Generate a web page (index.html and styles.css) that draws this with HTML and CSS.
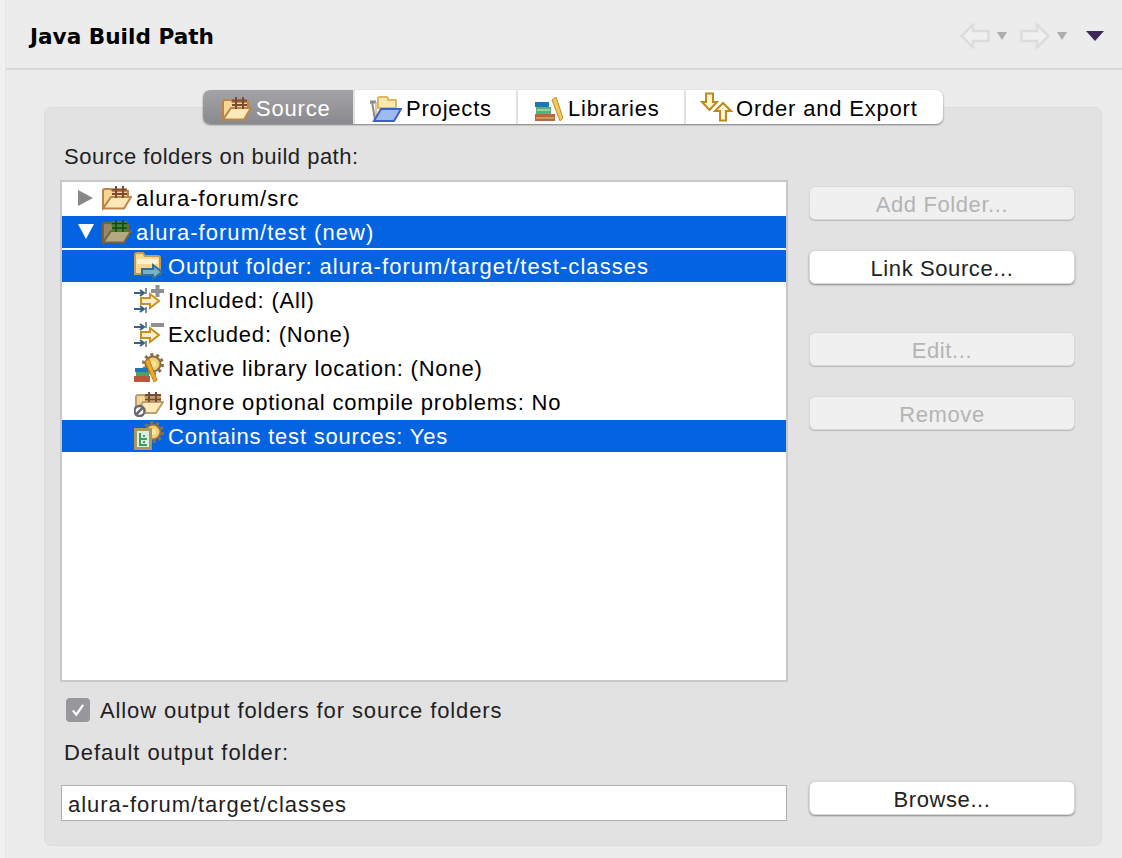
FILE: index.html
```html
<!DOCTYPE html>
<html lang="en">
<head>
  <meta charset="UTF-8">
  <title>Java Build Path</title>
  <link rel="stylesheet" href="styles.css">
</head>
<body>
  <svg class="defs" width="0" height="0">
    <symbol id="src-folder" viewBox="0 0 30 24">
      <path d="M1 22V5q0-2 2-2h6l2 2h15v8H9z" fill="#f5d692" stroke="#b9854a" stroke-width="2"/>
      <path d="M1 22.500 9 11h20l-7 11.500z" fill="#fde9b8" stroke="#b9854a" stroke-width="2"/>
      <path d="M10 3.500h15M10 8h15M14 0v12M21 0v12" stroke="#7c4a32" stroke-width="2" fill="none"/>
    </symbol>
    <symbol id="src-folder-sel" viewBox="0 0 30 24">
      <path d="M1 22V5q0-2 2-2h6l2 2h15v8H9z" fill="#95896a" stroke="#7a6238" stroke-width="2"/>
      <path d="M1 22.500 9 11h20l-7 11.500z" fill="#b4a982" stroke="#7a6238" stroke-width="2"/>
      <path d="M10 1h15v10H10z" fill="#3f8a2e"/>
      <path d="M10 3.500h15M10 8h15M14 0v12M21 0v12" stroke="#1f3f20" stroke-width="1.500" fill="none"/>
    </symbol>
    <symbol id="projects" viewBox="0 0 32 26">
      <path d="M0 6h6" fill="none" stroke="#8a8a90" stroke-width="3"/>
      <path d="M2 6l3 18" fill="none" stroke="#8a8a90" stroke-width="2"/>
      <path d="M8 7V2.500q0-1.500 1.500-1.500h7q1.500 0 1.500 1.500V4h8v8H8z" fill="#fbe8ae" stroke="#d9b866" stroke-width="2"/>
      <path d="M6 21V6" stroke="#d9b866" stroke-width="1.500"/>
      <path d="M4 25 11 13h20l-7 12z" fill="#9dbbee" stroke="#3f62c0" stroke-width="2"/>
    </symbol>
    <symbol id="books" viewBox="0 0 30 24">
      <path d="M1 5h14v5H1z" fill="#1c76b8"/>
      <path d="M2 10h15v7H2z" fill="#5fae7a"/>
      <path d="M3 12h13v2H3z" fill="#9ad0a8"/>
      <path d="M1 17h20v7H1z" fill="#b8683a"/>
      <path d="M2 20h18v2H2z" fill="#d69460"/>
      <path d="m18 3 4-3 7 21-3 3z" fill="#f0c860" stroke="#c98c22"/>
    </symbol>
    <symbol id="order" viewBox="0 0 33 30">
      <path d="M6 1.500h7V10h4l-7.500 8L2 10h4z" fill="#fbf2d0" stroke="#bb8a1e" stroke-width="2"/>
      <path d="M20 28.500V19h-5l8-8 8 8h-5v9.500z" fill="#fbf2d0" stroke="#bb8a1e" stroke-width="2"/>
    </symbol>
    <symbol id="output" viewBox="0 0 30 30">
      <path d="M1 23V4q0-2 2-2h6l2 3h13q2 0 2 2v16z" fill="#f8d894" stroke="#c89a58" stroke-width="2"/>
      <path d="M3 8h21v5H3z" fill="#fff2cf"/>
      <path d="M8 18h11v-4l9 7-9 7v-4H8z" fill="#7cb0c4" stroke="#2f6f9c" stroke-width="2"/>
    </symbol>
    <symbol id="filter-base" viewBox="0 0 30 30">
      <path d="M0 8h9M6 5l4 3-4 3M0 24h9M6 21l4 3-4 3" fill="none" stroke="#3d5f80" stroke-width="2"/>
      <path d="M12 3v6M12 22v6" stroke="#7a8ea0" stroke-width="2"/>
      <path d="M7 13h9V9l9 7-9 7v-4H7z" fill="#fbeec4" stroke="#c8901e" stroke-width="2"/>
    </symbol>
    <symbol id="included" viewBox="0 0 30 30">
      <use href="#filter-base" width="30" height="30"/>
      <path d="M23.500 0v12M17 6h13" stroke="#8e9094" stroke-width="4"/>
    </symbol>
    <symbol id="excluded" viewBox="0 0 30 30">
      <use href="#filter-base" width="30" height="30"/>
      <path d="M17 6h13" stroke="#8e9094" stroke-width="4"/>
    </symbol>
    <symbol id="gear" viewBox="0 0 22 22">
      <circle cx="11" cy="11" r="9.500" fill="none" stroke="#86704a" stroke-width="3" stroke-dasharray="3 2.970"/>
      <circle cx="11" cy="11" r="7.500" fill="#f2cf72" stroke="#86704a" stroke-width="2"/>
      <circle cx="11" cy="11" r="3" fill="#fbe6a8"/>
    </symbol>
    <symbol id="native" viewBox="0 0 30 30">
      <use href="#gear" x="8" y="0" width="22" height="22"/>
      <path d="M1 15h13v4H1z" fill="#1c76b8"/>
      <path d="M2 19h13v4H2z" fill="#4f9e6c"/>
      <path d="M0 23h16v6H0z" fill="#b8583a"/>
      <path d="m11 8 4-2 8 21-3 2z" fill="#eca82a" stroke="#c47f16"/>
    </symbol>
    <symbol id="ignore" viewBox="0 0 30 30">
      <path d="M2 24V10q0-2 2-2h6l2 2h14v6H9z" fill="#f5d692" stroke="#b8a070" stroke-width="2"/>
      <path d="M2 26 9 15h20l-7 11z" fill="#fde9b8" stroke="#b8a070" stroke-width="2"/>
      <path d="M11 8h16M11 12.500h16M15 5v10M22 5v10" stroke="#7c4a32" stroke-width="2" fill="none"/>
      <circle cx="5.500" cy="24" r="5" fill="#fff" stroke="#6a6a70" stroke-width="2.500"/>
      <path d="m2 27.500 7-7" stroke="#6a6a70" stroke-width="2.500"/>
    </symbol>
    <symbol id="contains" viewBox="0 0 30 30">
      <use href="#gear" x="8" y="0" width="22" height="22"/>
      <path d="M1.500 8.500h15v19h-15z" fill="#dcefe0" stroke="#a89a5c" stroke-width="3"/>
      <path d="M6 12v12h7M6 18h7M10 14v2M10 20v2" fill="none" stroke="#3f9a66" stroke-width="2"/>
    </symbol>
  </svg>

  <div class="page">
    <header class="title-bar">
      <h1>Java Build Path</h1>
      <div class="nav-tools">
        <svg class="nav-arrow" viewBox="0 0 30 26"><path d="M1.500 13 13 1.500V8h15.500v10H13v6.500z"/></svg>
        <span class="drop"></span>
        <svg class="nav-arrow next" viewBox="0 0 30 26"><path d="M28.500 13 17 1.500V8H1.500v10H17v6.500z"/></svg>
        <span class="drop"></span>
        <span class="menu-drop"></span>
      </div>
    </header>

    <section class="group">
      <div class="tabs">
        <div class="tab active"><svg class="tab-icon"><use href="#src-folder"/></svg>Source</div>
        <div class="tab"><svg class="tab-icon projects"><use href="#projects"/></svg>Projects</div>
        <div class="tab"><svg class="tab-icon"><use href="#books"/></svg>Libraries</div>
        <div class="tab"><svg class="tab-icon order"><use href="#order"/></svg>Order and Export</div>
      </div>

      <div class="content">
        <div class="wide field-label first">Source folders on build path:</div>

        <div class="tree">
          <div class="row"><span class="twistie closed"></span><svg class="row-icon"><use href="#src-folder"/></svg><span class="path">alura-forum/src</span></div>
          <div class="row selected"><span class="twistie open"></span><svg class="row-icon"><use href="#src-folder-sel"/></svg><span class="path">alura-forum/test (new)</span></div>
          <div class="row child selected"><svg class="row-icon"><use href="#output"/></svg>Output folder:&nbsp;<span class="path">alura-forum/target/test-classes</span></div>
          <div class="row child"><svg class="row-icon"><use href="#included"/></svg>Included: (All)</div>
          <div class="row child"><svg class="row-icon"><use href="#excluded"/></svg>Excluded: (None)</div>
          <div class="row child"><svg class="row-icon"><use href="#native"/></svg>Native library location: (None)</div>
          <div class="row child"><svg class="row-icon"><use href="#ignore"/></svg>Ignore optional compile problems: No</div>
          <div class="row child selected"><svg class="row-icon"><use href="#contains"/></svg>Contains test sources: Yes</div>
        </div>

        <div class="side-buttons">
          <button class="btn" disabled>Add Folder...</button>
          <button class="btn">Link Source...</button>
          <button class="btn spaced" disabled>Edit...</button>
          <button class="btn" disabled>Remove</button>
        </div>

        <label class="wide check-row">
          <span class="checkbox"><svg viewBox="0 0 14 14"><path d="m2.500 7.500 3 3.500 6-8.500"/></svg></span>
          <span class="check-text">Allow output folders for source folders</span>
        </label>

        <div class="wide field-label">Default output folder:</div>

        <div class="output-input">alura-forum/target/classes</div>
        <button class="btn browse">Browse...</button>
      </div>
    </section>
  </div>
</body>
</html>
```

FILE: styles.css
```css
html, body {
  margin: 0;
  height: 100%;
}
body {
  background: #f0f0f0;
  font-family: "Liberation Sans", Arial, sans-serif;
  font-size: 22px;
  letter-spacing: 0.8px;
  color: #1f1f1f;
  overflow: hidden;
}
.defs {
  position: absolute;
}
.page {
  margin-left: 5px;
  height: 858px;
  background: #ececec;
  border-left: 1px solid #e6e6e6;
  box-sizing: border-box;
}
.title-bar {
  height: 70px;
  box-sizing: border-box;
  border-bottom: 2px solid #d8d8d8;
  display: flex;
  align-items: center;
  padding: 4px 18px 0 24px;
}
.title-bar h1 {
  margin: 0;
  font-family: "DejaVu Sans", sans-serif;
  font-size: 21.600px;
  font-weight: bold;
  letter-spacing: 0;
  color: #000;
  flex: 1;
}
.nav-tools {
  display: flex;
  align-items: center;
}
.nav-arrow {
  width: 30px;
  height: 26px;
  fill: #f0f0f0;
  stroke: #dcdcdc;
  stroke-width: 2.500;
}
.next {
  margin-left: 13px;
}
.drop {
  margin-left: 7px;
  border-top: 8px solid #acacac;
  border-left: 5px solid transparent;
  border-right: 5px solid transparent;
}
.menu-drop {
  margin-left: 19px;
  border-top: 10px solid #3a2a58;
  border-left: 9px solid transparent;
  border-right: 9px solid transparent;
}
.group {
  margin: 37px 0 0 38px;
  width: 1058px;
  height: 739px;
  box-sizing: border-box;
  background: #e2e2e2;
  border: 1px solid #dcdcdc;
  border-radius: 7px;
}
.tabs {
  display: flex;
  width: 740px;
  height: 34px;
  margin: -18px auto 0;
  background: #fff;
  border-radius: 7px;
  box-shadow: 0 1px 2px rgba(0, 0, 0, 0.45);
  overflow: hidden;
  color: #000;
}
.tab {
  display: flex;
  align-items: center;
  border-left: 2px solid #e2e2e2;
  box-sizing: border-box;
  padding-top: 3px;
}
.tab:nth-child(1) { width: 150px; border-left: 0; padding-left: 19px; }
.tab:nth-child(2) { width: 163px; padding-left: 15px; }
.tab:nth-child(3) { width: 168px; padding-left: 16px; }
.tab:nth-child(4) { width: 259px; padding-left: 14px; }
.tab.active {
  background: linear-gradient(#a4a4a8, #8a8a8e);
  color: #fff;
}
.tab-icon {
  width: 30px;
  height: 24px;
  margin-right: 4px;
  flex: none;
}
.tab-icon.projects {
  width: 32px;
  height: 26px;
}
.tab-icon.order {
  width: 33px;
  height: 30px;
  margin: -3px 3px 0 0;
}
.content {
  display: grid;
  grid-template-columns: 728px 266px;
  column-gap: 21px;
  padding: 0 15px;
}
.wide {
  grid-column: 1 / 3;
}
.field-label {
  height: 26px;
  line-height: 28px;
  padding-left: 4px;
  margin-top: 15px;
  letter-spacing: 0.95px;
}
.field-label.first {
  margin-top: 20px;
  margin-bottom: 10px;
  line-height: 26px;
  letter-spacing: 0.5px;
}
.tree {
  height: 502px;
  box-sizing: border-box;
  background: #fff;
  border: 2px solid #c8c8c8;
  display: flex;
  flex-direction: column;
  gap: 2px;
  color: #000;
}
.row {
  height: 32px;
  box-sizing: border-box;
  display: flex;
  align-items: center;
  padding-left: 16px;
  padding-top: 2px;
  white-space: nowrap;
}
.row.selected {
  background: #0463e1;
  color: #fff;
}
.row.child {
  padding-left: 72px;
}
.path {
  letter-spacing: 1.05px;
}
.twistie {
  width: 16px;
  height: 16px;
  margin: -2px 8px 0 0;
  flex: none;
  box-sizing: border-box;
}
.twistie.closed {
  border-left: 15px solid #888;
  border-top: 8px solid transparent;
  border-bottom: 8px solid transparent;
}
.twistie.open {
  border-top: 15px solid #fff;
  border-left: 8px solid transparent;
  border-right: 8px solid transparent;
}
.row-icon {
  width: 30px;
  height: 30px;
  margin: -2px 4px 0 0;
  flex: none;
}
.side-buttons {
  display: flex;
  flex-direction: column;
  gap: 30px;
  padding-top: 6px;
}
.btn {
  height: 34px;
  padding: 4px 0 0;
  font: inherit;
  letter-spacing: 0.6px;
  color: #222;
  background: #fff;
  border: 1px solid #d8d8d8;
  border-radius: 6px;
  box-shadow: 0 1px 2px rgba(0, 0, 0, 0.4);
}
.btn:disabled {
  background: #f0f0f0;
  color: #b4b4b4;
  box-shadow: 0 1px 1px rgba(0, 0, 0, 0.18);
}
.btn.spaced {
  margin-top: 18px;
}
.check-row {
  display: flex;
  align-items: center;
  gap: 10px;
  height: 28px;
  margin-top: 14px;
  padding-left: 6px;
}
.check-text {
  padding-top: 2px;
  letter-spacing: 0.88px;
}
.checkbox {
  width: 24px;
  height: 24px;
  box-sizing: border-box;
  background: #98989c;
  border-radius: 4px;
  padding: 4px;
  display: flex;
}
.checkbox path {
  fill: none;
  stroke: #fff;
  stroke-width: 2;
}
.output-input {
  height: 36px;
  line-height: 37px;
  margin: 20px 1px 0;
  padding-left: 6px;
  background: #fff;
  border: 1px solid #b0b0b0;
  box-sizing: border-box;
  letter-spacing: 0.95px;
}
.browse {
  margin-top: 16px;
}
```
